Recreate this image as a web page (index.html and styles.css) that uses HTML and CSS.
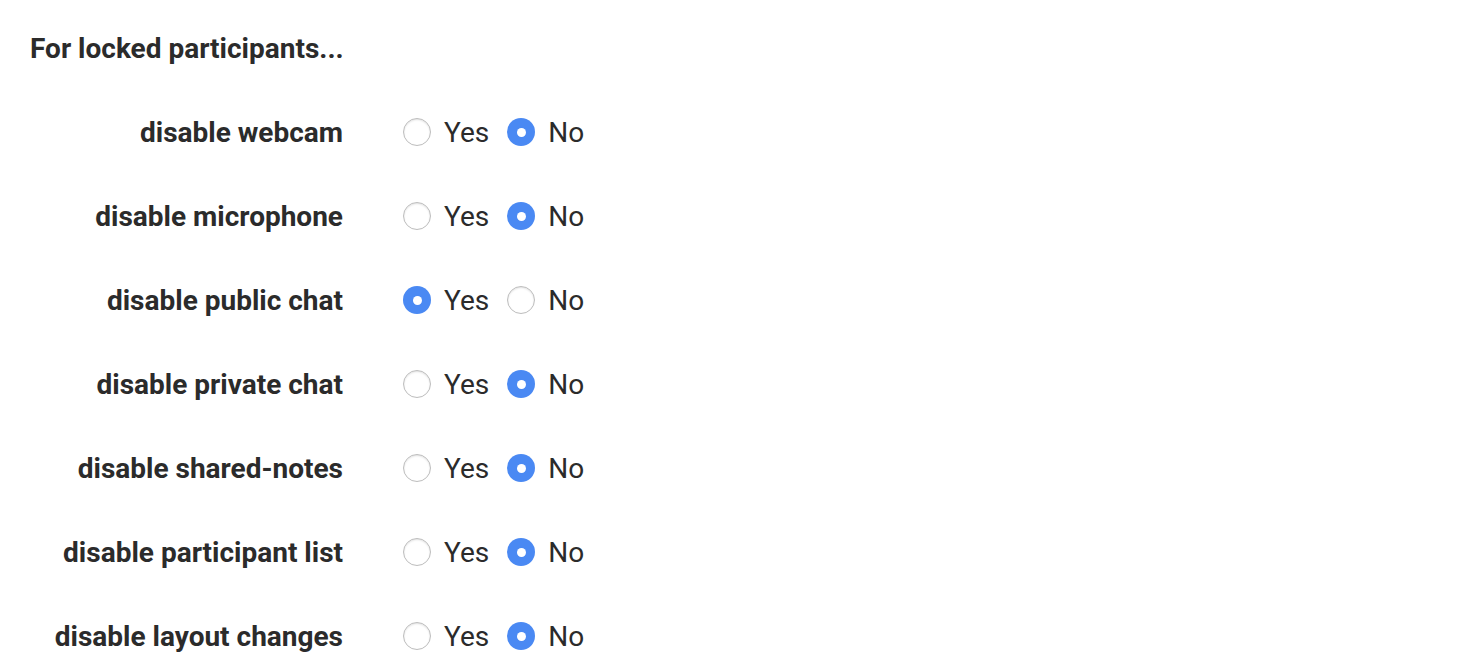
FILE: index.html
```html
<!DOCTYPE html>
<html>
<head>
<meta charset="utf-8">
<link rel="stylesheet" href="styles.css">
</head>
<body>
<div class="panel">
  <h2 class="heading">For locked participants...</h2>
  <div class="row"><span class="label">disable webcam</span><div class="opts"><span class="radio"></span><span class="opt">Yes</span><span class="radio on"></span><span class="opt">No</span></div></div>
  <div class="row"><span class="label">disable microphone</span><div class="opts"><span class="radio"></span><span class="opt">Yes</span><span class="radio on"></span><span class="opt">No</span></div></div>
  <div class="row"><span class="label">disable public chat</span><div class="opts"><span class="radio on"></span><span class="opt">Yes</span><span class="radio"></span><span class="opt">No</span></div></div>
  <div class="row"><span class="label">disable private chat</span><div class="opts"><span class="radio"></span><span class="opt">Yes</span><span class="radio on"></span><span class="opt">No</span></div></div>
  <div class="row"><span class="label">disable shared-notes</span><div class="opts"><span class="radio"></span><span class="opt">Yes</span><span class="radio on"></span><span class="opt">No</span></div></div>
  <div class="row"><span class="label">disable participant list</span><div class="opts"><span class="radio"></span><span class="opt">Yes</span><span class="radio on"></span><span class="opt">No</span></div></div>
  <div class="row"><span class="label">disable layout changes</span><div class="opts"><span class="radio"></span><span class="opt">Yes</span><span class="radio on"></span><span class="opt">No</span></div></div>
</div>
</body>
</html>
```
FILE: styles.css
```css
html, body {
  margin: 0;
  padding: 0;
  background: #ffffff;
}
body {
  font-family: Roboto, "Liberation Sans", sans-serif;
  color: #2b2b2b;
}
.panel {
  padding: 6px 0 0 30px;
}
.heading {
  margin: 0;
  height: 84px;
  display: flex;
  align-items: center;
  font-size: 28px;
  font-weight: 700;
}
.row {
  height: 84px;
  display: flex;
  align-items: center;
}
.label {
  width: 313px;
  text-align: right;
  font-size: 28px;
  font-weight: 700;
  margin-right: 60px;
}
.opts {
  display: flex;
  align-items: center;
}
.radio {
  width: 28px;
  height: 28px;
  box-sizing: border-box;
  border-radius: 50%;
  border: 1px solid #bdbdbd;
  background: #fff;
  box-shadow: inset 0 1px 2px rgba(0,0,0,0.12);
  display: flex;
  align-items: center;
  justify-content: center;
}
.radio.on {
  border: none;
  background: #4a89f3;
  box-shadow: none;
}
.radio.on::after {
  content: "";
  width: 9px;
  height: 9px;
  border-radius: 50%;
  background: #fff;
}
.opt {
  font-size: 28px;
  margin-left: 13px;
  margin-right: 18px;
}
```
